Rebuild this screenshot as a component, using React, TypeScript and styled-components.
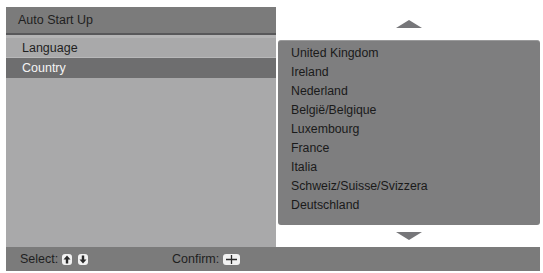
import React from "react";
import styled, { createGlobalStyle } from "styled-components";

const Global = createGlobalStyle`
  html, body { margin: 0; padding: 0; background: #ffffff; }
  body { font-family: "Liberation Sans", Arial, Helvetica, sans-serif; }
`;

const Screen = styled.div`
  width: 543px;
  height: 273px;
  box-sizing: border-box;
  padding: 7px 3px 2px 6px;
  display: flex;
  flex-direction: column;
  background: #ffffff;
`;

const Main = styled.div`
  flex: 1;
  display: grid;
  grid-template-columns: 270px 1fr;
  column-gap: 2px;
  min-height: 0;
`;

const LeftPanel = styled.div`
  display: flex;
  flex-direction: column;
  background: #a9a9aa;
`;

const TitleBar = styled.div`
  height: 26px;
  display: flex;
  align-items: center;
  padding-left: 12px;
  background: #7b7b7b;
  border-bottom: 2px solid #58585a;
  color: #1f1f1f;
  font-size: 12.5px;
`;

const Stripe = styled.div`
  height: 3px;
  background: #b4b4b5;
`;

const MenuRow = styled.div<{ $active?: boolean }>`
  height: 19px;
  display: flex;
  align-items: center;
  padding-left: 16px;
  font-size: 12.5px;
  color: ${(p) => (p.$active ? "#f4f4f4" : "#1f1f1f")};
  background: ${(p) => (p.$active ? "#6e6e6f" : "#a9a9aa")};
  border-bottom: 1px solid ${(p) => (p.$active ? "#6e6e6f" : "#b8b8b9")};
`;

const RightCol = styled.div`
  display: flex;
  flex-direction: column;
`;

const ArrowArea = styled.div<{ $h: number }>`
  height: ${(p) => p.$h}px;
  display: flex;
  align-items: center;
  justify-content: center;
`;

const Triangle = styled.div<{ $down?: boolean }>`
  width: 0;
  height: 0;
  border-left: 13px solid transparent;
  border-right: 13px solid transparent;
  ${(p) =>
    p.$down
      ? "border-top: 8px solid #77777a;"
      : "border-bottom: 8px solid #77777a;"}
`;

const Dropdown = styled.div`
  height: 185px;
  box-sizing: border-box;
  background: #7e7e7f;
  border-radius: 3px;
  border-top: 1px solid #9a9a9b;
  padding: 3px 0 0 13px;
  display: flex;
  flex-direction: column;
`;

const Item = styled.div`
  height: 18.9px;
  display: flex;
  align-items: center;
  font-size: 12.3px;
  color: #1a1a1a;
`;

const BottomBar = styled.div`
  height: 24px;
  background: #7b7b7b;
  display: flex;
  align-items: center;
  padding-left: 14px;
  font-size: 12.5px;
  color: #1f1f1f;
`;

const Hint = styled.div<{ $w?: number }>`
  display: flex;
  align-items: center;
  gap: 4px;
  width: ${(p) => (p.$w ? `${p.$w}px` : "auto")};
`;

const Keys = styled.span`
  display: inline-flex;
  gap: 6px;
`;

const KeyBox = styled.span<{ $wide?: boolean }>`
  display: inline-flex;
  align-items: center;
  justify-content: center;
  width: ${(p) => (p.$wide ? 17 : 10)}px;
  height: 11px;
  border-radius: 3px;
  background: #f2f2f2;
`;

const ArrowKey = ({ down }: { down?: boolean }) => (
  <KeyBox>
    <svg width="8" height="9" viewBox="0 0 8 9">
      <path
        d={down ? "M2.8 0.5h2.4v4h2.3L4 8.5 0.5 4.5h2.3z" : "M2.8 8.5h2.4v-4h2.3L4 0.5 0.5 4.5h2.3z"}
        fill="#2a2a2a"
      />
    </svg>
  </KeyBox>
);

const ConfirmKey = () => (
  <KeyBox $wide>
    <svg width="17" height="11" viewBox="0 0 17 11">
      <path d="M8.5 1v9M3 5.5h11" stroke="#2a2a2a" strokeWidth="1.3" />
    </svg>
  </KeyBox>
);

const countries = [
  "United Kingdom",
  "Ireland",
  "Nederland",
  "België/Belgique",
  "Luxembourg",
  "France",
  "Italia",
  "Schweiz/Suisse/Svizzera",
  "Deutschland",
];

export default function App() {
  return (
    <>
      <Global />
      <Screen>
        <Main>
          <LeftPanel>
            <TitleBar>Auto Start Up</TitleBar>
            <Stripe />
            <MenuRow>Language</MenuRow>
            <MenuRow $active>Country</MenuRow>
          </LeftPanel>
          <RightCol>
            <ArrowArea $h={33}>
              <Triangle />
            </ArrowArea>
            <Dropdown>
              {countries.map((c) => (
                <Item key={c}>{c}</Item>
              ))}
            </Dropdown>
            <ArrowArea $h={22}>
              <Triangle $down />
            </ArrowArea>
          </RightCol>
        </Main>
        <BottomBar>
          <Hint $w={152}>
            Select:
            <Keys>
              <ArrowKey />
              <ArrowKey down />
            </Keys>
          </Hint>
          <Hint>
            Confirm:
            <ConfirmKey />
          </Hint>
        </BottomBar>
      </Screen>
    </>
  );
}
